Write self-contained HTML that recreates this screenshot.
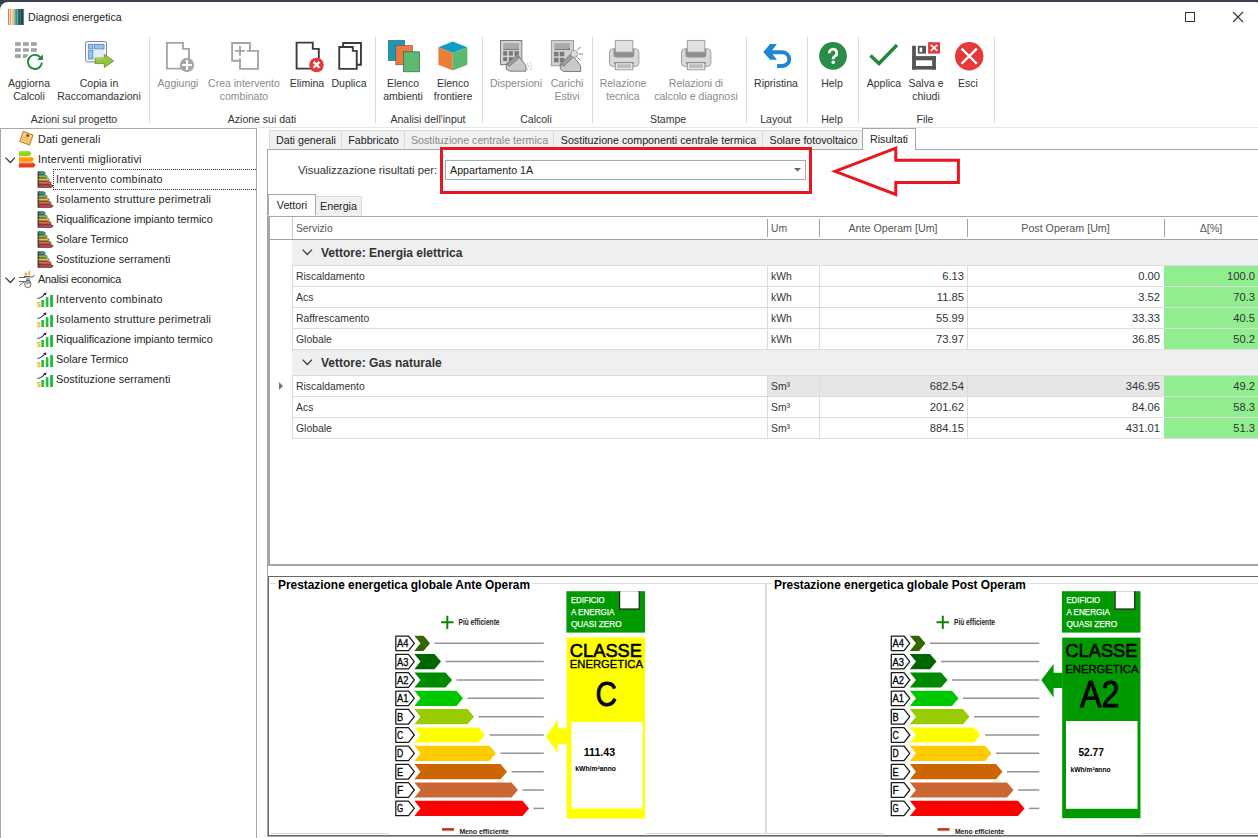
<!DOCTYPE html>
<html><head><meta charset="utf-8">
<style>
html,body{margin:0;padding:0}
body{width:1258px;height:838px;overflow:hidden;position:relative;background:#384050;font-family:"Liberation Sans",sans-serif;color:#222}
.a{position:absolute}
.t{position:absolute;white-space:nowrap;line-height:13px;font-size:11px;margin-top:1px}
.c{text-align:center}
.rl{position:absolute;white-space:nowrap;line-height:13px;font-size:10.5px;color:#333;text-align:center;width:120px}
.dis{color:#8a8a8a}
.sep{position:absolute;top:37px;height:86px;width:1px;background:#dcdcdc}
.gl{position:absolute;white-space:nowrap;line-height:13px;font-size:10.5px;color:#333;text-align:center;width:160px;top:113px}
svg{position:absolute;overflow:visible}
</style></head><body>
<div class="a" id="win" style="left:0;top:2px;width:1264px;height:836px;background:#fff;border-radius:8px 8px 0 0"></div>

<!-- title bar -->
<svg style="left:8px;top:9px" width="16" height="16">
<rect x="0" y="0" width="1.2" height="16" fill="#e07a4a"/>
<rect x="1.8" y="0" width="1.2" height="16" fill="#f0a060"/>
<rect x="3.6" y="0" width="1.2" height="16" fill="#e8c070"/>
<rect x="5.4" y="0" width="1.5" height="16" fill="#9ab070"/>
<rect x="7.2" y="0" width="2" height="16" fill="#3a9080"/>
<rect x="9.5" y="0" width="2.5" height="16" fill="#1a6a6a"/>
<rect x="12.2" y="0" width="3.5" height="16" fill="#1a4a55"/>
</svg>
<div class="t" style="left:28px;top:10px;font-size:10.6px;color:#1a1a1a">Diagnosi energetica</div>
<div class="a" style="left:1185px;top:12px;width:8px;height:8px;border:1px solid #333"></div>
<svg style="left:1233px;top:12px" width="10" height="10"><path d="M0,0L10,10M10,0L0,10" stroke="#333" stroke-width="1.1"/></svg>

<!-- ribbon -->
<div class="a" style="left:257px;top:127px;width:1001px;height:1px;background:#e6e6e6"></div>
<div class="sep" style="left:149px"></div>
<div class="sep" style="left:375px"></div>
<div class="sep" style="left:482px"></div>
<div class="sep" style="left:592px"></div>
<div class="sep" style="left:746px"></div>
<div class="sep" style="left:807px"></div>
<div class="sep" style="left:858px"></div>
<div class="sep" style="left:994px"></div>

<div class="gl" style="left:-6px">Azioni sul progetto</div>
<div class="gl" style="left:182px">Azione sui dati</div>
<div class="gl" style="left:348px">Analisi dell'input</div>
<div class="gl" style="left:456px">Calcoli</div>
<div class="gl" style="left:588px">Stampe</div>
<div class="gl" style="left:696px">Layout</div>
<div class="gl" style="left:752px">Help</div>
<div class="gl" style="left:845px">File</div>

<div class="rl" style="left:-31px;top:77px">Aggiorna<br>Calcoli</div>
<div class="rl" style="left:39px;top:77px">Copia in<br>Raccomandazioni</div>
<div class="rl dis" style="left:118px;top:77px">Aggiungi</div>
<div class="rl dis" style="left:184px;top:77px">Crea intervento<br>combinato</div>
<div class="rl" style="left:247px;top:77px">Elimina</div>
<div class="rl" style="left:289px;top:77px">Duplica</div>
<div class="rl" style="left:343px;top:77px">Elenco<br>ambienti</div>
<div class="rl" style="left:393px;top:77px">Elenco<br>frontiere</div>
<div class="rl dis" style="left:456px;top:77px">Dispersioni</div>
<div class="rl dis" style="left:507px;top:77px">Carichi<br>Estivi</div>
<div class="rl dis" style="left:563px;top:77px">Relazione<br>tecnica</div>
<div class="rl dis" style="left:636px;top:77px">Relazioni di<br>calcolo e diagnosi</div>
<div class="rl" style="left:716px;top:77px">Ripristina</div>
<div class="rl" style="left:772px;top:77px">Help</div>
<div class="rl" style="left:824px;top:77px">Applica</div>
<div class="rl" style="left:866px;top:77px">Salva e<br>chiudi</div>
<div class="rl" style="left:908px;top:77px">Esci</div>

<!-- Aggiorna Calcoli -->
<svg style="left:14px;top:41px" width="30" height="30" viewBox="0 0 30 30">
<g fill="#a2a2a2">
<rect x="1" y="1.2" width="5.8" height="3.6"/><rect x="9" y="1.2" width="5.8" height="3.6"/><rect x="17" y="1.2" width="5.8" height="3.6"/>
<rect x="1" y="7.2" width="5.8" height="3.6"/><rect x="9" y="7.2" width="5.8" height="3.6"/><rect x="17" y="7.2" width="5.8" height="3.6"/>
<rect x="1" y="13.2" width="5.8" height="3.7"/><path d="M9,13.2H14.7L12,16.9H9Z"/>
</g>
<path d="M27.9,21.5A7,7 0 1 1 26.6,16.8" fill="none" stroke="#1f8a3a" stroke-width="1.9"/>
<path d="M28.9,13.2V18.9H23.2Z" fill="#1f8a3a"/>
</svg>
<!-- Copia in Raccomandazioni -->
<svg style="left:84px;top:40px" width="32" height="30" viewBox="0 0 32 30">
<rect x="1.6" y="1.5" width="20.9" height="20.4" rx="1.6" fill="#fff" stroke="#7383ba" stroke-width="1"/>
<rect x="3.5" y="3" width="17" height="16.5" fill="#e8ecf7"/>
<g fill="#95c3e6" stroke="#5b93cc" stroke-width="0.9"><rect x="4.6" y="4.5" width="4.3" height="4.4"/><rect x="10.5" y="4.5" width="9.5" height="4.4"/><rect x="4.6" y="10.5" width="4.3" height="8.5"/></g>
<path d="M11,18.1H20.3V14.2L29.7,20.9L20.3,27.6V23.6H11Z" fill="#94c43c" stroke="#5f8f22" stroke-width="0.8"/>
<path d="M11.6,19H20.8" stroke="#c2e27a" stroke-width="1"/>
</svg>
<!-- Aggiungi -->
<svg style="left:165px;top:41px" width="32" height="32" viewBox="0 0 32 32">
<path d="M1.9,1.9H18V7.9H24V27.6H1.9Z" fill="#fff" stroke="#a6a6a6" stroke-width="1.9"/>
<circle cx="22" cy="24" r="7.2" fill="#a6a6a6"/>
<path d="M22,19V29M17,24H27" stroke="#fff" stroke-width="2.1"/>
</svg>
<!-- Crea intervento combinato -->
<svg style="left:230px;top:41px" width="32" height="32" viewBox="0 0 32 32">
<path d="M20,10.8V2H2.1V19.7H10M17,9.9H28V27.9H10V17.2M5,9.9H14.9M10,4.9V14.8" fill="none" stroke="#a3a3a3" stroke-width="1.85"/>
</svg>
<!-- Elimina -->
<svg style="left:295px;top:41px" width="32" height="32" viewBox="0 0 32 32">
<path d="M1.6,1.6H17.8V7.9H23.8V27.6H1.6Z" fill="#fff" stroke="#3c3c3c" stroke-width="1.9"/>
<circle cx="21.5" cy="24" r="7.3" fill="#e53a3a"/>
<path d="M18.6,20.9L24.4,26.7M24.4,20.9L18.6,26.7" stroke="#fff" stroke-width="2.3"/>
</svg>
<!-- Duplica -->
<svg style="left:338px;top:41px" width="30" height="32" viewBox="0 0 30 32">
<path d="M5.15,6V2.05H22.95V23.75H19" fill="none" stroke="#3c3c3c" stroke-width="1.9"/>
<path d="M1.25,6.05H14.8V9.9H18.75V27.85H1.25Z" fill="#fff" stroke="#3c3c3c" stroke-width="1.9"/>
</svg>
<!-- Elenco ambienti -->
<svg style="left:388px;top:40px" width="33" height="33" viewBox="0 0 33 33">
<rect x="0.5" y="0.5" width="16" height="20" fill="#1b98b6" stroke="#2b5a66" stroke-width="0.6"/>
<rect x="7.8" y="5.5" width="16.5" height="19.3" fill="#e97a41" stroke="#7a4a30" stroke-width="0.6"/>
<rect x="15.4" y="11.8" width="16" height="20" fill="#5db872" stroke="#2f6a40" stroke-width="0.7"/>
</svg>
<!-- Elenco frontiere -->
<svg style="left:438px;top:41px" width="31" height="31" viewBox="0 0 31 31">
<path d="M14.7,0.4L29.4,6.3L14.7,12L0.4,6.3Z" fill="#109cc4"/>
<path d="M0.4,6.3L14.7,12V29.4L0.4,23.8Z" fill="#e97e3b"/>
<path d="M29.4,6.3L14.7,12V29.4L29.4,23.8Z" fill="#5bb96f"/>
</svg>
<!-- Dispersioni -->
<svg style="left:500px;top:40px" width="34" height="33" viewBox="0 0 34 33">
<rect x="0.5" y="0.5" width="21.3" height="24.2" fill="#d2d2d2" stroke="#7a7a7a" stroke-width="1"/>
<rect x="3.3" y="3.2" width="15.7" height="6.4" fill="#a9a9a9"/>
<rect x="3.3" y="9" width="15.7" height="0.8" fill="#6a6a6a"/>
<g fill="#7a7a7a"><rect x="3.2" y="11.1" width="4" height="4.5"/><rect x="8.9" y="11.1" width="4" height="4.5"/><rect x="14.5" y="11.1" width="4.4" height="4.5"/><rect x="3.2" y="17.1" width="4" height="3.9"/><rect x="8.9" y="17.1" width="4" height="3.9"/></g>
<path d="M6.3,24V29.2L10,31.2H26V25.5L18.4,16Z" fill="#c9c9c9" stroke="#555" stroke-width="0.7"/>
<path d="M6.5,24.2L16,15.5L19.2,17.8L9.8,26.2Z" fill="#9c9c9c" stroke="#555" stroke-width="0.5"/>
<g fill="#a8a8a8"><rect x="27" y="23.5" width="1" height="1"/><rect x="29.5" y="22.5" width="1" height="1"/><rect x="28" y="26" width="1" height="1"/><rect x="30.5" y="25.5" width="1" height="1"/><rect x="27" y="28.5" width="1" height="1"/><rect x="29.5" y="29" width="1" height="1"/><rect x="31" y="28" width="1" height="1"/></g>
</svg>
<!-- Carichi Estivi -->
<svg style="left:550px;top:40px" width="34" height="33" viewBox="0 0 34 33">
<rect x="1.3" y="0.5" width="22.2" height="25.3" fill="#d2d2d2" stroke="#8a8a8a" stroke-width="0.8"/>
<rect x="4.3" y="3.2" width="15.7" height="6.4" fill="#a9a9a9"/>
<rect x="4.3" y="9" width="15.7" height="0.8" fill="#6a6a6a"/>
<g fill="#7a7a7a"><rect x="4" y="11.8" width="4.5" height="4.5"/><rect x="9.8" y="11.8" width="4.5" height="4.5"/><rect x="4" y="17.8" width="4.5" height="4.5"/><rect x="9.8" y="17.8" width="4.5" height="4.5"/></g>
<path d="M10.3,24V29.2L13.5,31.5H30.7V25.8L22.8,15.6Z" fill="#c9c9c9" stroke="#555" stroke-width="0.7"/>
<path d="M10.5,24.2L20.5,14L23.8,16.5L13.6,26.4Z" fill="#9c9c9c" stroke="#555" stroke-width="0.5"/>
<circle cx="24.3" cy="13.8" r="3.6" fill="#dcdcdc" stroke="#777" stroke-width="0.6"/>
<path d="M27.5,10L30.5,7M29,14H33M27.5,17.5L30.5,20.5M20,9.5L18.5,8" stroke="#666" stroke-width="0.9"/>
</svg>
<!-- Relazione tecnica -->
<svg style="left:609px;top:40px" width="32" height="31" viewBox="0 0 32 31">
<rect x="0.5" y="8.8" width="29.4" height="17.6" rx="3.5" fill="#d9d9d9" stroke="#9a9a9a" stroke-width="0.9"/>
<path d="M4.5,8.8H25.3V14.4A3,3 0 0 1 22.3,17.4H7.5A3,3 0 0 1 4.5,14.4Z" fill="#8f8f8f"/>
<rect x="6.3" y="0.4" width="17.6" height="11.7" fill="#e2e2e2" stroke="#9a9a9a" stroke-width="0.9"/>
<rect x="5" y="22" width="20" height="1.8" fill="#8f8f8f"/>
<rect x="6.3" y="23.6" width="17.6" height="6.2" fill="#bdbdbd" stroke="#9a9a9a" stroke-width="0.9"/>
<rect x="7.6" y="23.8" width="15" height="4.8" fill="none" stroke="#f2f2f2" stroke-width="0.9"/>
</svg>
<!-- Relazioni di calcolo -->
<svg style="left:681px;top:40px" width="32" height="31" viewBox="0 0 32 31">
<rect x="0.5" y="8.8" width="29.4" height="17.6" rx="3.5" fill="#d9d9d9" stroke="#9a9a9a" stroke-width="0.9"/>
<path d="M4.5,8.8H25.3V14.4A3,3 0 0 1 22.3,17.4H7.5A3,3 0 0 1 4.5,14.4Z" fill="#8f8f8f"/>
<rect x="6.3" y="0.4" width="17.6" height="11.7" fill="#e2e2e2" stroke="#9a9a9a" stroke-width="0.9"/>
<rect x="5" y="22" width="20" height="1.8" fill="#8f8f8f"/>
<rect x="6.3" y="23.6" width="17.6" height="6.2" fill="#bdbdbd" stroke="#9a9a9a" stroke-width="0.9"/>
<rect x="7.6" y="23.8" width="15" height="4.8" fill="none" stroke="#f2f2f2" stroke-width="0.9"/>
</svg>
<!-- Ripristina -->
<svg style="left:762px;top:42px" width="31" height="28" viewBox="0 0 31 28">
<path d="M1.3,9.9L8.1,1.9H14.9L8.9,9.9L14.9,17.7H8.1Z" fill="#1f86d4"/>
<path d="M8.5,10.3H20.45A6.85,6.85 0 0 1 20.45,24H15.1" fill="none" stroke="#1f86d4" stroke-width="3.9"/>
</svg>
<!-- Help -->
<svg style="left:819px;top:42px" width="29" height="29" viewBox="0 0 29 29">
<circle cx="14" cy="13.9" r="13.9" fill="#2a8c47"/>
<path d="M10.4,11.2A3.7,3.7 0 1 1 15.6,14.3C14.4,15 14,15.6 14,17.3" fill="none" stroke="#fff" stroke-width="2.7"/>
<circle cx="14.2" cy="20.2" r="1.75" fill="#fff"/>
</svg>
<!-- Applica -->
<svg style="left:869px;top:43px" width="30" height="24" viewBox="0 0 30 24">
<path d="M1.5,12.5L10,20.5L28,2" fill="none" stroke="#23893a" stroke-width="3.4"/>
</svg>
<!-- Salva e chiudi -->
<svg style="left:911px;top:41px" width="31" height="31" viewBox="0 0 31 31">
<g fill="#555"><rect x="1.1" y="4.8" width="3.8" height="23.8"/><rect x="1.1" y="25" width="23.8" height="3.6"/><rect x="21.2" y="15.1" width="3.7" height="13.5"/><rect x="1.1" y="15.1" width="23.8" height="4.2"/><rect x="6.8" y="4.8" width="8.2" height="7.8"/></g>
<rect x="8.6" y="6.6" width="2.6" height="4.4" fill="#fff"/>
<rect x="17.1" y="1.2" width="11.9" height="11.4" fill="#e53a3a"/>
<path d="M19.8,3.9L26.3,9.9M26.3,3.9L19.8,9.9" stroke="#fff" stroke-width="1.6"/>
</svg>
<!-- Esci -->
<svg style="left:955px;top:42px" width="29" height="29" viewBox="0 0 29 29">
<circle cx="14.2" cy="14.2" r="14.2" fill="#e53a3a"/>
<path d="M6.6,6.6L21.8,21.8M21.8,6.6L6.6,21.8" stroke="#fff" stroke-width="2.3"/>
</svg>

<!-- tree panel -->
<div class="a" style="left:0;top:128px;width:255px;height:710px;border:1px solid #a8a8a8;border-bottom:none;background:#fff"></div>
<!-- TREE_START -->
<svg style="left:19px;top:131px" width="16" height="16" viewBox="0 0 16 16">
<g transform="translate(-0.6,-0.8) rotate(20 8 8)"><rect x="2.8" y="2.8" width="10.4" height="10.4" fill="#f3d77a" stroke="#c58a45" stroke-width="1.2"/>
<path d="M4.5,8H11.5M4.5,10.3H11.5" stroke="#c9a060" stroke-width="0.8"/></g>
<circle cx="8.7" cy="4.4" r="1.5" fill="#c0282a"/>
</svg>
<div class="t" style="left:38px;top:132px;font-size:10.8px;color:#222;letter-spacing:0.140px">Dati generali</div>
<svg style="left:5px;top:157px" width="11" height="7" viewBox="0 0 11 7"><path d="M0.6,0.6L5.3,5.5L10,0.6" fill="none" stroke="#3a3a3a" stroke-width="1.3"/></svg>
<svg style="left:19px;top:151px" width="17" height="17" viewBox="0 0 17 17">
<path d="M0,0H10.5L12.5,2.5L10.5,5H0Z" fill="#8fd61a"/>
<path d="M0,5.8H13L15,8.3L13,10.8H0Z" fill="#ff9a00"/>
<path d="M0,11.4H14.5L16.5,13.9L14.5,16.4H0Z" fill="#ef3a1a"/>
<path d="M0,0.8H10M0,6.6H12.5M0,12.2H14" stroke="#fff" stroke-opacity="0.35" stroke-width="1"/>
</svg>
<div class="t" style="left:38px;top:152px;font-size:10.8px;color:#222;letter-spacing:0.230px">Interventi migliorativi</div>
<svg style="left:37px;top:171px" width="17" height="17" viewBox="0 0 17 17">
<rect x="0.5" y="0.5" width="2.2" height="16" fill="#555"/>
<path d="M1.5,0.8H6.8L8.5,2.2L6.8,3.6H1.5Z" fill="#2aa58a" stroke="#333" stroke-width="0.7"/>
<path d="M1.5,4H8.5L10.3,5.4L8.5,6.8H1.5Z" fill="#8ac34a" stroke="#333" stroke-width="0.7"/>
<path d="M1.5,7.2H10.5L12.3,8.6L10.5,10H1.5Z" fill="#f2c33a" stroke="#333" stroke-width="0.7"/>
<path d="M1.5,10.4H12.5L14.3,11.8L12.5,13.2H1.5Z" fill="#e8643a" stroke="#333" stroke-width="0.7"/>
<path d="M1.5,13.6H14.3L16.2,15L14.3,16.4H1.5Z" fill="#d8394a" stroke="#333" stroke-width="0.7"/>
</svg>
<div class="t" style="left:56px;top:172px;font-size:10.8px;color:#222;letter-spacing:0.300px">Intervento combinato</div>
<svg style="left:37px;top:191px" width="17" height="17" viewBox="0 0 17 17">
<rect x="0.5" y="0.5" width="2.2" height="16" fill="#555"/>
<path d="M1.5,0.8H6.8L8.5,2.2L6.8,3.6H1.5Z" fill="#2aa58a" stroke="#333" stroke-width="0.7"/>
<path d="M1.5,4H8.5L10.3,5.4L8.5,6.8H1.5Z" fill="#8ac34a" stroke="#333" stroke-width="0.7"/>
<path d="M1.5,7.2H10.5L12.3,8.6L10.5,10H1.5Z" fill="#f2c33a" stroke="#333" stroke-width="0.7"/>
<path d="M1.5,10.4H12.5L14.3,11.8L12.5,13.2H1.5Z" fill="#e8643a" stroke="#333" stroke-width="0.7"/>
<path d="M1.5,13.6H14.3L16.2,15L14.3,16.4H1.5Z" fill="#d8394a" stroke="#333" stroke-width="0.7"/>
</svg>
<div class="t" style="left:56px;top:192px;font-size:10.8px;color:#222;letter-spacing:0.200px">Isolamento strutture perimetrali</div>
<svg style="left:37px;top:211px" width="17" height="17" viewBox="0 0 17 17">
<rect x="0.5" y="0.5" width="2.2" height="16" fill="#555"/>
<path d="M1.5,0.8H6.8L8.5,2.2L6.8,3.6H1.5Z" fill="#2aa58a" stroke="#333" stroke-width="0.7"/>
<path d="M1.5,4H8.5L10.3,5.4L8.5,6.8H1.5Z" fill="#8ac34a" stroke="#333" stroke-width="0.7"/>
<path d="M1.5,7.2H10.5L12.3,8.6L10.5,10H1.5Z" fill="#f2c33a" stroke="#333" stroke-width="0.7"/>
<path d="M1.5,10.4H12.5L14.3,11.8L12.5,13.2H1.5Z" fill="#e8643a" stroke="#333" stroke-width="0.7"/>
<path d="M1.5,13.6H14.3L16.2,15L14.3,16.4H1.5Z" fill="#d8394a" stroke="#333" stroke-width="0.7"/>
</svg>
<div class="t" style="left:56px;top:212px;font-size:10.8px;color:#222;letter-spacing:-0.034px">Riqualificazione impianto termico</div>
<svg style="left:37px;top:231px" width="17" height="17" viewBox="0 0 17 17">
<rect x="0.5" y="0.5" width="2.2" height="16" fill="#555"/>
<path d="M1.5,0.8H6.8L8.5,2.2L6.8,3.6H1.5Z" fill="#2aa58a" stroke="#333" stroke-width="0.7"/>
<path d="M1.5,4H8.5L10.3,5.4L8.5,6.8H1.5Z" fill="#8ac34a" stroke="#333" stroke-width="0.7"/>
<path d="M1.5,7.2H10.5L12.3,8.6L10.5,10H1.5Z" fill="#f2c33a" stroke="#333" stroke-width="0.7"/>
<path d="M1.5,10.4H12.5L14.3,11.8L12.5,13.2H1.5Z" fill="#e8643a" stroke="#333" stroke-width="0.7"/>
<path d="M1.5,13.6H14.3L16.2,15L14.3,16.4H1.5Z" fill="#d8394a" stroke="#333" stroke-width="0.7"/>
</svg>
<div class="t" style="left:56px;top:232px;font-size:10.8px;color:#222;letter-spacing:0.040px">Solare Termico</div>
<svg style="left:37px;top:251px" width="17" height="17" viewBox="0 0 17 17">
<rect x="0.5" y="0.5" width="2.2" height="16" fill="#555"/>
<path d="M1.5,0.8H6.8L8.5,2.2L6.8,3.6H1.5Z" fill="#2aa58a" stroke="#333" stroke-width="0.7"/>
<path d="M1.5,4H8.5L10.3,5.4L8.5,6.8H1.5Z" fill="#8ac34a" stroke="#333" stroke-width="0.7"/>
<path d="M1.5,7.2H10.5L12.3,8.6L10.5,10H1.5Z" fill="#f2c33a" stroke="#333" stroke-width="0.7"/>
<path d="M1.5,10.4H12.5L14.3,11.8L12.5,13.2H1.5Z" fill="#e8643a" stroke="#333" stroke-width="0.7"/>
<path d="M1.5,13.6H14.3L16.2,15L14.3,16.4H1.5Z" fill="#d8394a" stroke="#333" stroke-width="0.7"/>
</svg>
<div class="t" style="left:56px;top:252px;font-size:10.8px;color:#222;letter-spacing:0.070px">Sostituzione serramenti</div>
<svg style="left:5px;top:277px" width="11" height="7" viewBox="0 0 11 7"><path d="M0.6,0.6L5.3,5.5L10,0.6" fill="none" stroke="#3a3a3a" stroke-width="1.3"/></svg>
<svg style="left:19px;top:266px" width="22" height="22" viewBox="0 0 22 22">
<path d="M0,11.5H6.5M0,15.5H5.5M0.2,19.7L6,15.2" stroke="#555" stroke-width="0.9" fill="none"/>
<ellipse cx="8.8" cy="18" rx="3.1" ry="3.6" fill="#fff" stroke="#555" stroke-width="0.9"/>
<path d="M8,11.5V18.5M10,11.5V18M5,10.5L11,10.5" stroke="#555" stroke-width="1"/>
<path d="M11,11.2L14,10.7L15.8,9.2" stroke="#555" stroke-width="0.9" fill="none"/>
<circle cx="6.8" cy="8.2" r="1.3" fill="#f5a623"/><circle cx="10.2" cy="7.6" r="1.3" fill="#f5a623"/>
<path d="M6,6.2H8M9.5,5.4H11.5" stroke="#999" stroke-width="0.6"/>
</svg>
<div class="t" style="left:38px;top:272px;font-size:10.8px;color:#222;letter-spacing:-0.240px">Analisi economica</div>
<svg style="left:37px;top:292px" width="18" height="17" viewBox="0 0 18 17">
<path d="M0.5,6.5C3.5,6 6,4.5 8,1.5" fill="none" stroke="#2a2a5a" stroke-width="1.1"/>
<path d="M6.2,1.2L9.6,0.4L8.8,3.6Z" fill="#2a2a5a"/>
<rect x="4.3" y="8" width="2.6" height="7" fill="#1fbf3a"/>
<rect x="8.8" y="5.2" width="2.6" height="9.8" fill="#1fbf3a"/>
<rect x="13.1" y="3" width="2.9" height="12" fill="#1fbf3a"/>
<text x="0" y="15" font-size="7" font-weight="bold" fill="#f5b400" font-family="Liberation Sans">$</text>
</svg>
<div class="t" style="left:56px;top:292px;font-size:10.8px;color:#222;letter-spacing:0.300px">Intervento combinato</div>
<svg style="left:37px;top:312px" width="18" height="17" viewBox="0 0 18 17">
<path d="M0.5,6.5C3.5,6 6,4.5 8,1.5" fill="none" stroke="#2a2a5a" stroke-width="1.1"/>
<path d="M6.2,1.2L9.6,0.4L8.8,3.6Z" fill="#2a2a5a"/>
<rect x="4.3" y="8" width="2.6" height="7" fill="#1fbf3a"/>
<rect x="8.8" y="5.2" width="2.6" height="9.8" fill="#1fbf3a"/>
<rect x="13.1" y="3" width="2.9" height="12" fill="#1fbf3a"/>
<text x="0" y="15" font-size="7" font-weight="bold" fill="#f5b400" font-family="Liberation Sans">$</text>
</svg>
<div class="t" style="left:56px;top:312px;font-size:10.8px;color:#222;letter-spacing:0.200px">Isolamento strutture perimetrali</div>
<svg style="left:37px;top:332px" width="18" height="17" viewBox="0 0 18 17">
<path d="M0.5,6.5C3.5,6 6,4.5 8,1.5" fill="none" stroke="#2a2a5a" stroke-width="1.1"/>
<path d="M6.2,1.2L9.6,0.4L8.8,3.6Z" fill="#2a2a5a"/>
<rect x="4.3" y="8" width="2.6" height="7" fill="#1fbf3a"/>
<rect x="8.8" y="5.2" width="2.6" height="9.8" fill="#1fbf3a"/>
<rect x="13.1" y="3" width="2.9" height="12" fill="#1fbf3a"/>
<text x="0" y="15" font-size="7" font-weight="bold" fill="#f5b400" font-family="Liberation Sans">$</text>
</svg>
<div class="t" style="left:56px;top:332px;font-size:10.8px;color:#222;letter-spacing:-0.034px">Riqualificazione impianto termico</div>
<svg style="left:37px;top:352px" width="18" height="17" viewBox="0 0 18 17">
<path d="M0.5,6.5C3.5,6 6,4.5 8,1.5" fill="none" stroke="#2a2a5a" stroke-width="1.1"/>
<path d="M6.2,1.2L9.6,0.4L8.8,3.6Z" fill="#2a2a5a"/>
<rect x="4.3" y="8" width="2.6" height="7" fill="#1fbf3a"/>
<rect x="8.8" y="5.2" width="2.6" height="9.8" fill="#1fbf3a"/>
<rect x="13.1" y="3" width="2.9" height="12" fill="#1fbf3a"/>
<text x="0" y="15" font-size="7" font-weight="bold" fill="#f5b400" font-family="Liberation Sans">$</text>
</svg>
<div class="t" style="left:56px;top:352px;font-size:10.8px;color:#222;letter-spacing:0.040px">Solare Termico</div>
<svg style="left:37px;top:372px" width="18" height="17" viewBox="0 0 18 17">
<path d="M0.5,6.5C3.5,6 6,4.5 8,1.5" fill="none" stroke="#2a2a5a" stroke-width="1.1"/>
<path d="M6.2,1.2L9.6,0.4L8.8,3.6Z" fill="#2a2a5a"/>
<rect x="4.3" y="8" width="2.6" height="7" fill="#1fbf3a"/>
<rect x="8.8" y="5.2" width="2.6" height="9.8" fill="#1fbf3a"/>
<rect x="13.1" y="3" width="2.9" height="12" fill="#1fbf3a"/>
<text x="0" y="15" font-size="7" font-weight="bold" fill="#f5b400" font-family="Liberation Sans">$</text>
</svg>
<div class="t" style="left:56px;top:372px;font-size:10.8px;color:#222;letter-spacing:0.070px">Sostituzione serramenti</div>
<div class="a" style="left:53px;top:169px;width:202px;height:19px;border:1px dotted #333;border-right:none"></div>
<!-- TREE_END -->

<!-- content -->
<!-- CONTENT_START -->
<div class="a" style="left:269px;top:130px;width:72px;height:19px;background:#f0f0f0;border-top:1px solid #dcdcdc;border-left:1px solid #dcdcdc;box-sizing:border-box"></div>
<div class="t c" style="left:270px;top:133px;width:72px;font-size:10.7px;color:#222">Dati generali</div>
<div class="a" style="left:341px;top:130px;width:63px;height:19px;background:#f0f0f0;border-top:1px solid #dcdcdc;border-left:1px solid #dcdcdc;box-sizing:border-box"></div>
<div class="t c" style="left:342px;top:133px;width:63px;font-size:10.7px;color:#222">Fabbricato</div>
<div class="a" style="left:404px;top:130px;width:149px;height:19px;background:#f0f0f0;border-top:1px solid #dcdcdc;border-left:1px solid #dcdcdc;box-sizing:border-box"></div>
<div class="t c" style="left:405px;top:133px;width:149px;font-size:10.7px;color:#8a8a8a">Sostituzione centrale termica</div>
<div class="a" style="left:553px;top:130px;width:209px;height:19px;background:#f0f0f0;border-top:1px solid #dcdcdc;border-left:1px solid #dcdcdc;box-sizing:border-box"></div>
<div class="t c" style="left:554px;top:133px;width:209px;font-size:10.7px;color:#222">Sostituzione componenti centrale termica</div>
<div class="a" style="left:762px;top:130px;width:101px;height:19px;background:#f0f0f0;border-top:1px solid #dcdcdc;border-left:1px solid #dcdcdc;box-sizing:border-box"></div>
<div class="t c" style="left:763px;top:133px;width:101px;font-size:10.7px;color:#222">Solare fotovoltaico</div>
<div class="a" style="left:267px;top:149px;width:1000px;height:688px;border:1px solid #a8a8a8;box-sizing:border-box;background:#fff"></div>
<div class="a" style="left:862px;top:128px;width:54px;height:22px;background:#fff;border:1px solid #a8a8a8;border-bottom:none;box-sizing:border-box"></div>
<div class="t c" style="left:863px;top:132px;width:52px;font-size:10.7px;color:#222">Risultati</div>
<div class="t" style="left:298px;top:163px;font-size:11.3px;color:#333;">Visualizzazione risultati per:</div>
<div class="a" style="left:445px;top:160px;width:361px;height:20px;border:1px solid #a9a9a9;box-sizing:border-box;background:#fff"></div>
<div class="t" style="left:450px;top:163px;font-size:10.7px;color:#222;">Appartamento 1A</div>
<svg style="left:794px;top:168px" width="8" height="4"><path d="M0,0H7L3.5,3.5Z" fill="#666"/></svg>
<div class="a" style="left:440px;top:147px;width:372px;height:47px;border:3px solid #e8161e;box-sizing:border-box"></div>
<svg style="left:0;top:0" width="1258" height="838"><path d="M835,171.3L895.8,148.2V160.2H958.4V182.6H895.8V194.5Z" fill="none" stroke="#e8161e" stroke-width="3" stroke-linejoin="miter"/></svg>
<div class="a" style="left:316px;top:196px;width:46px;height:20px;background:#f0f0f0;border-top:1px solid #dcdcdc;border-right:1px solid #dcdcdc;box-sizing:border-box"></div>
<div class="t c" style="left:316px;top:199px;width:45px;font-size:10.7px;color:#222">Energia</div>
<div class="a" style="left:268px;top:216px;width:1000px;height:350px;border:2px solid #a6a6a6;border-top:1px solid #a6a6a6;box-sizing:border-box;background:#fff"></div>
<div class="a" style="left:268px;top:194px;width:48px;height:21px;background:#fff;border:1px solid #a8a8a8;border-bottom:none;box-sizing:border-box"></div>
<div class="t c" style="left:269px;top:198px;width:46px;font-size:10.7px;color:#222">Vettori</div>
<div class="a" style="left:292px;top:217px;width:1px;height:22px;background:#c8c8c8"></div>
<div class="a" style="left:767px;top:219px;width:1px;height:18px;background:#a0a0a0"></div>
<div class="a" style="left:819px;top:219px;width:1px;height:18px;background:#a0a0a0"></div>
<div class="a" style="left:967px;top:219px;width:1px;height:18px;background:#a0a0a0"></div>
<div class="a" style="left:1164px;top:219px;width:1px;height:18px;background:#a0a0a0"></div>
<div class="a" style="left:270px;top:239px;width:988px;height:1px;background:#a0a0a0"></div>
<div class="t" style="left:296px;top:221px;font-size:10.3px;color:#555;">Servizio</div>
<div class="t" style="left:771px;top:221px;font-size:10.3px;color:#555;">Um</div>
<div class="t c" style="left:819px;top:221px;width:148px;font-size:10.7px;color:#555">Ante Operam [Um]</div>
<div class="t c" style="left:967px;top:221px;width:197px;font-size:10.7px;color:#555">Post Operam [Um]</div>
<div class="t c" style="left:1164px;top:221px;width:94px;font-size:10.7px;color:#555">&Delta;[%]</div>
<div class="a" style="left:292px;top:240px;width:966px;height:26px;background:#efefef;border-bottom:1px solid #dcdcdc;box-sizing:border-box"></div>
<svg style="left:302px;top:249px" width="11" height="7" viewBox="0 0 11 7"><path d="M0.6,0.6L5.3,5.5L10,0.6" fill="none" stroke="#3a3a3a" stroke-width="1.3"/></svg>
<div class="t" style="left:321px;top:246px;font-size:12px;color:#333;font-weight:bold">Vettore: Energia elettrica</div>
<div class="a" style="left:1164px;top:266px;width:94px;height:20px;background:#90ee90"></div>
<div class="a" style="left:292px;top:286px;width:966px;height:1px;background:#dcdcdc"></div>
<div class="a" style="left:292px;top:265px;width:1px;height:21px;background:#dcdcdc"></div>
<div class="a" style="left:767px;top:265px;width:1px;height:21px;background:#dcdcdc"></div>
<div class="a" style="left:819px;top:265px;width:1px;height:21px;background:#dcdcdc"></div>
<div class="a" style="left:967px;top:265px;width:1px;height:21px;background:#dcdcdc"></div>
<div class="t" style="left:296px;top:269px;font-size:10.4px;color:#333;">Riscaldamento</div>
<div class="t" style="left:771px;top:269px;font-size:10.4px;color:#333;">kWh</div>
<div class="t" style="left:819px;top:269px;width:145px;text-align:right;font-size:11.2px;color:#333">6.13</div>
<div class="t" style="left:967px;top:269px;width:193px;text-align:right;font-size:11.2px;color:#333">0.00</div>
<div class="t" style="left:1164px;top:269px;width:91px;text-align:right;font-size:11.2px;color:#333">100.0</div>
<div class="a" style="left:1164px;top:287px;width:94px;height:20px;background:#90ee90"></div>
<div class="a" style="left:292px;top:307px;width:966px;height:1px;background:#dcdcdc"></div>
<div class="a" style="left:292px;top:286px;width:1px;height:21px;background:#dcdcdc"></div>
<div class="a" style="left:767px;top:286px;width:1px;height:21px;background:#dcdcdc"></div>
<div class="a" style="left:819px;top:286px;width:1px;height:21px;background:#dcdcdc"></div>
<div class="a" style="left:967px;top:286px;width:1px;height:21px;background:#dcdcdc"></div>
<div class="t" style="left:296px;top:290px;font-size:10.4px;color:#333;">Acs</div>
<div class="t" style="left:771px;top:290px;font-size:10.4px;color:#333;">kWh</div>
<div class="t" style="left:819px;top:290px;width:145px;text-align:right;font-size:11.2px;color:#333">11.85</div>
<div class="t" style="left:967px;top:290px;width:193px;text-align:right;font-size:11.2px;color:#333">3.52</div>
<div class="t" style="left:1164px;top:290px;width:91px;text-align:right;font-size:11.2px;color:#333">70.3</div>
<div class="a" style="left:1164px;top:308px;width:94px;height:20px;background:#90ee90"></div>
<div class="a" style="left:292px;top:328px;width:966px;height:1px;background:#dcdcdc"></div>
<div class="a" style="left:292px;top:307px;width:1px;height:21px;background:#dcdcdc"></div>
<div class="a" style="left:767px;top:307px;width:1px;height:21px;background:#dcdcdc"></div>
<div class="a" style="left:819px;top:307px;width:1px;height:21px;background:#dcdcdc"></div>
<div class="a" style="left:967px;top:307px;width:1px;height:21px;background:#dcdcdc"></div>
<div class="t" style="left:296px;top:311px;font-size:10.4px;color:#333;">Raffrescamento</div>
<div class="t" style="left:771px;top:311px;font-size:10.4px;color:#333;">kWh</div>
<div class="t" style="left:819px;top:311px;width:145px;text-align:right;font-size:11.2px;color:#333">55.99</div>
<div class="t" style="left:967px;top:311px;width:193px;text-align:right;font-size:11.2px;color:#333">33.33</div>
<div class="t" style="left:1164px;top:311px;width:91px;text-align:right;font-size:11.2px;color:#333">40.5</div>
<div class="a" style="left:1164px;top:329px;width:94px;height:20px;background:#90ee90"></div>
<div class="a" style="left:292px;top:349px;width:966px;height:1px;background:#dcdcdc"></div>
<div class="a" style="left:292px;top:328px;width:1px;height:21px;background:#dcdcdc"></div>
<div class="a" style="left:767px;top:328px;width:1px;height:21px;background:#dcdcdc"></div>
<div class="a" style="left:819px;top:328px;width:1px;height:21px;background:#dcdcdc"></div>
<div class="a" style="left:967px;top:328px;width:1px;height:21px;background:#dcdcdc"></div>
<div class="t" style="left:296px;top:332px;font-size:10.4px;color:#333;">Globale</div>
<div class="t" style="left:771px;top:332px;font-size:10.4px;color:#333;">kWh</div>
<div class="t" style="left:819px;top:332px;width:145px;text-align:right;font-size:11.2px;color:#333">73.97</div>
<div class="t" style="left:967px;top:332px;width:193px;text-align:right;font-size:11.2px;color:#333">36.85</div>
<div class="t" style="left:1164px;top:332px;width:91px;text-align:right;font-size:11.2px;color:#333">50.2</div>
<div class="a" style="left:292px;top:350px;width:966px;height:26px;background:#efefef;border-bottom:1px solid #dcdcdc;box-sizing:border-box"></div>
<svg style="left:302px;top:359px" width="11" height="7" viewBox="0 0 11 7"><path d="M0.6,0.6L5.3,5.5L10,0.6" fill="none" stroke="#3a3a3a" stroke-width="1.3"/></svg>
<div class="t" style="left:321px;top:356px;font-size:12px;color:#333;font-weight:bold">Vettore: Gas naturale</div>
<div class="a" style="left:767px;top:376px;width:397px;height:20px;background:#e6e6e6"></div>
<div class="a" style="left:1164px;top:376px;width:94px;height:20px;background:#90ee90"></div>
<div class="a" style="left:292px;top:396px;width:966px;height:1px;background:#dcdcdc"></div>
<div class="a" style="left:292px;top:375px;width:1px;height:21px;background:#dcdcdc"></div>
<div class="a" style="left:767px;top:375px;width:1px;height:21px;background:#dcdcdc"></div>
<div class="a" style="left:819px;top:375px;width:1px;height:21px;background:#dcdcdc"></div>
<div class="a" style="left:967px;top:375px;width:1px;height:21px;background:#dcdcdc"></div>
<div class="t" style="left:296px;top:379px;font-size:10.4px;color:#333;">Riscaldamento</div>
<div class="t" style="left:771px;top:379px;font-size:10.4px;color:#333;">Sm&sup3;</div>
<div class="t" style="left:819px;top:379px;width:145px;text-align:right;font-size:11.2px;color:#333">682.54</div>
<div class="t" style="left:967px;top:379px;width:193px;text-align:right;font-size:11.2px;color:#333">346.95</div>
<div class="t" style="left:1164px;top:379px;width:91px;text-align:right;font-size:11.2px;color:#333">49.2</div>
<svg style="left:279px;top:382px" width="5" height="8"><path d="M0,0L4,4L0,8Z" fill="#777"/></svg>
<div class="a" style="left:1164px;top:397px;width:94px;height:20px;background:#90ee90"></div>
<div class="a" style="left:292px;top:417px;width:966px;height:1px;background:#dcdcdc"></div>
<div class="a" style="left:292px;top:396px;width:1px;height:21px;background:#dcdcdc"></div>
<div class="a" style="left:767px;top:396px;width:1px;height:21px;background:#dcdcdc"></div>
<div class="a" style="left:819px;top:396px;width:1px;height:21px;background:#dcdcdc"></div>
<div class="a" style="left:967px;top:396px;width:1px;height:21px;background:#dcdcdc"></div>
<div class="t" style="left:296px;top:400px;font-size:10.4px;color:#333;">Acs</div>
<div class="t" style="left:771px;top:400px;font-size:10.4px;color:#333;">Sm&sup3;</div>
<div class="t" style="left:819px;top:400px;width:145px;text-align:right;font-size:11.2px;color:#333">201.62</div>
<div class="t" style="left:967px;top:400px;width:193px;text-align:right;font-size:11.2px;color:#333">84.06</div>
<div class="t" style="left:1164px;top:400px;width:91px;text-align:right;font-size:11.2px;color:#333">58.3</div>
<div class="a" style="left:1164px;top:418px;width:94px;height:20px;background:#90ee90"></div>
<div class="a" style="left:292px;top:438px;width:966px;height:1px;background:#dcdcdc"></div>
<div class="a" style="left:292px;top:417px;width:1px;height:21px;background:#dcdcdc"></div>
<div class="a" style="left:767px;top:417px;width:1px;height:21px;background:#dcdcdc"></div>
<div class="a" style="left:819px;top:417px;width:1px;height:21px;background:#dcdcdc"></div>
<div class="a" style="left:967px;top:417px;width:1px;height:21px;background:#dcdcdc"></div>
<div class="t" style="left:296px;top:421px;font-size:10.4px;color:#333;">Globale</div>
<div class="t" style="left:771px;top:421px;font-size:10.4px;color:#333;">Sm&sup3;</div>
<div class="t" style="left:819px;top:421px;width:145px;text-align:right;font-size:11.2px;color:#333">884.15</div>
<div class="t" style="left:967px;top:421px;width:193px;text-align:right;font-size:11.2px;color:#333">431.01</div>
<div class="t" style="left:1164px;top:421px;width:91px;text-align:right;font-size:11.2px;color:#333">51.3</div>
<div class="a" style="left:268px;top:576px;width:990px;height:260px;border-top:1px solid #666;border-left:1px solid #666;border-bottom:1px solid #666;box-sizing:border-box;background:#fff"></div>
<div class="a" style="left:270px;top:583px;width:496px;height:251px;border:1px solid #dcdcdc;border-left:none;box-sizing:border-box"></div>
<div class="a" style="left:766px;top:583px;width:500px;height:251px;border:1px solid #dcdcdc;box-sizing:border-box"></div>
<div class="t" style="left:276px;top:578px;padding:0 2px;background:#fff;font-size:11.9px;font-weight:bold;color:#000">Prestazione energetica globale Ante Operam</div>
<div class="t" style="left:772px;top:578px;padding:0 2px;background:#fff;font-size:11.9px;font-weight:bold;color:#000">Prestazione energetica globale Post Operam</div>
<!-- LABELS_START -->
<svg style="left:0;top:0" width="1258" height="838">
<rect x="389" y="592" width="256" height="243" fill="#fff"/><rect x="884.5" y="592" width="256" height="243" fill="#fff"/><g transform="translate(0,0)"><path d="M441,622.3H453.5M447.3,615.8V629" stroke="#108010" stroke-width="2"/>
<text x="458.5" y="625.2" font-size="8.2" font-weight="bold" fill="#222" font-family="Liberation Sans" textLength="41" lengthAdjust="spacingAndGlyphs">Più efficiente</text>
<path d="M414.3,635.7L420.5,643.3L414.3,650.9H423.5L430.0,643.3L423.5,635.7Z" fill="#336600"/>
<path d="M395.8,636.0H408.5L414.3,643.3L408.5,650.6H395.8Z" fill="#fff" stroke="#1a1a1a" stroke-width="1.25" stroke-linejoin="round"/>
<text x="397" y="647.3" font-size="10.5" fill="#000" stroke="#000" stroke-width="0.3" font-family="Liberation Sans" textLength="11.4" lengthAdjust="spacingAndGlyphs">A4</text>
<path d="M434.5,643.3H543.8" stroke="#939393" stroke-width="1.5"/>
<path d="M414.3,654.0L420.5,661.6L414.3,669.2H434.5L441.0,661.6L434.5,654.0Z" fill="#006600"/>
<path d="M395.8,654.3H408.5L414.3,661.6L408.5,668.9H395.8Z" fill="#fff" stroke="#1a1a1a" stroke-width="1.25" stroke-linejoin="round"/>
<text x="397" y="665.6" font-size="10.5" fill="#000" stroke="#000" stroke-width="0.3" font-family="Liberation Sans" textLength="11.4" lengthAdjust="spacingAndGlyphs">A3</text>
<path d="M445.5,661.6H543.8" stroke="#939393" stroke-width="1.5"/>
<path d="M414.3,672.4L420.5,680.0L414.3,687.6H445.5L452.0,680.0L445.5,672.4Z" fill="#008a00"/>
<path d="M395.8,672.7H408.5L414.3,680.0L408.5,687.3H395.8Z" fill="#fff" stroke="#1a1a1a" stroke-width="1.25" stroke-linejoin="round"/>
<text x="397" y="684.0" font-size="10.5" fill="#000" stroke="#000" stroke-width="0.3" font-family="Liberation Sans" textLength="11.4" lengthAdjust="spacingAndGlyphs">A2</text>
<path d="M456.5,680.0H543.8" stroke="#939393" stroke-width="1.5"/>
<path d="M414.3,690.7L420.5,698.3L414.3,705.9H456.5L463.0,698.3L456.5,690.7Z" fill="#00c800"/>
<path d="M395.8,691.0H408.5L414.3,698.3L408.5,705.6H395.8Z" fill="#fff" stroke="#1a1a1a" stroke-width="1.25" stroke-linejoin="round"/>
<text x="397" y="702.3" font-size="10.5" fill="#000" stroke="#000" stroke-width="0.3" font-family="Liberation Sans" textLength="11.4" lengthAdjust="spacingAndGlyphs">A1</text>
<path d="M467.5,698.3H543.8" stroke="#939393" stroke-width="1.5"/>
<path d="M414.3,709.1L420.5,716.7L414.3,724.3H467.5L474.0,716.7L467.5,709.1Z" fill="#99cc00"/>
<path d="M395.8,709.4H408.5L414.3,716.7L408.5,724.0H395.8Z" fill="#fff" stroke="#1a1a1a" stroke-width="1.25" stroke-linejoin="round"/>
<text x="397" y="720.7" font-size="10.5" fill="#000" stroke="#000" stroke-width="0.3" font-family="Liberation Sans" textLength="6.2" lengthAdjust="spacingAndGlyphs">B</text>
<path d="M478.5,716.7H543.8" stroke="#939393" stroke-width="1.5"/>
<path d="M414.3,727.4L420.5,735.0L414.3,742.6H478.5L485.0,735.0L478.5,727.4Z" fill="#ffff00"/>
<path d="M395.8,727.7H408.5L414.3,735.0L408.5,742.3H395.8Z" fill="#fff" stroke="#1a1a1a" stroke-width="1.25" stroke-linejoin="round"/>
<text x="397" y="739.0" font-size="10.5" fill="#000" stroke="#000" stroke-width="0.3" font-family="Liberation Sans" textLength="6.2" lengthAdjust="spacingAndGlyphs">C</text>
<path d="M489.5,735.0H543.8" stroke="#939393" stroke-width="1.5"/>
<path d="M414.3,745.7L420.5,753.3L414.3,760.9H489.5L496.0,753.3L489.5,745.7Z" fill="#ffcc00"/>
<path d="M395.8,746.0H408.5L414.3,753.3L408.5,760.6H395.8Z" fill="#fff" stroke="#1a1a1a" stroke-width="1.25" stroke-linejoin="round"/>
<text x="397" y="757.3" font-size="10.5" fill="#000" stroke="#000" stroke-width="0.3" font-family="Liberation Sans" textLength="6.2" lengthAdjust="spacingAndGlyphs">D</text>
<path d="M500.5,753.3H543.8" stroke="#939393" stroke-width="1.5"/>
<path d="M414.3,764.1L420.5,771.7L414.3,779.3H500.5L507.0,771.7L500.5,764.1Z" fill="#cc6600"/>
<path d="M395.8,764.4H408.5L414.3,771.7L408.5,779.0H395.8Z" fill="#fff" stroke="#1a1a1a" stroke-width="1.25" stroke-linejoin="round"/>
<text x="397" y="775.7" font-size="10.5" fill="#000" stroke="#000" stroke-width="0.3" font-family="Liberation Sans" textLength="6.2" lengthAdjust="spacingAndGlyphs">E</text>
<path d="M511.5,771.7H543.8" stroke="#939393" stroke-width="1.5"/>
<path d="M414.3,782.4L420.5,790.0L414.3,797.6H511.5L518.0,790.0L511.5,782.4Z" fill="#cc6633"/>
<path d="M395.8,782.7H408.5L414.3,790.0L408.5,797.3H395.8Z" fill="#fff" stroke="#1a1a1a" stroke-width="1.25" stroke-linejoin="round"/>
<text x="397" y="794.0" font-size="10.5" fill="#000" stroke="#000" stroke-width="0.3" font-family="Liberation Sans" textLength="6.2" lengthAdjust="spacingAndGlyphs">F</text>
<path d="M522.5,790.0H543.8" stroke="#939393" stroke-width="1.5"/>
<path d="M414.3,800.8L420.5,808.4L414.3,816.0H522.5L529.0,808.4L522.5,800.8Z" fill="#ff0000"/>
<path d="M395.8,801.1H408.5L414.3,808.4L408.5,815.7H395.8Z" fill="#fff" stroke="#1a1a1a" stroke-width="1.25" stroke-linejoin="round"/>
<text x="397" y="812.4" font-size="10.5" fill="#000" stroke="#000" stroke-width="0.3" font-family="Liberation Sans" textLength="6.2" lengthAdjust="spacingAndGlyphs">G</text>
<path d="M533.5,808.4H543.8" stroke="#939393" stroke-width="1.5"/>
<path d="M442,829.4H454" stroke="#cc3311" stroke-width="2.6"/>
<text x="459.4" y="833.6" font-size="7.5" font-weight="bold" fill="#222" font-family="Liberation Sans" textLength="49.5" lengthAdjust="spacingAndGlyphs">Meno efficiente</text>
<rect x="566.4" y="591.2" width="78.6" height="41.4" fill="#009900"/>
<rect x="619.6" y="590.6" width="19.6" height="18.4" fill="#fff" stroke="#222" stroke-width="1.2"/>
<rect x="619" y="589.5" width="21" height="1.6" fill="#fff"/>
<text x="570.9" y="602.8" font-size="9.6" fill="#fff" stroke="#fff" stroke-width="0.25" font-family="Liberation Sans" textLength="33.8" lengthAdjust="spacingAndGlyphs">EDIFICIO</text>
<text x="570.9" y="614.6" font-size="9.6" fill="#fff" stroke="#fff" stroke-width="0.25" font-family="Liberation Sans" textLength="43.5" lengthAdjust="spacingAndGlyphs">A ENERGIA</text>
<text x="570.9" y="626.8" font-size="9.6" fill="#fff" stroke="#fff" stroke-width="0.25" font-family="Liberation Sans" textLength="50.8" lengthAdjust="spacingAndGlyphs">QUASI ZERO</text>
<rect x="566.7" y="637.4" width="78.3" height="181.1" fill="#ffff00"/>
<path d="M546,736.2L557.9,719.5V728.3H567V744H557.9V753.6Z" fill="#ffff00"/>
<text x="569.8" y="656.7" font-size="19" fill="#000" stroke="#000" stroke-width="0.6" font-family="Liberation Sans" textLength="72.2" lengthAdjust="spacingAndGlyphs">CLASSE</text>
<text x="569.8" y="668.2" font-size="11.7" fill="#000" stroke="#000" stroke-width="0.35" font-family="Liberation Sans" textLength="73.2" lengthAdjust="spacingAndGlyphs">ENERGETICA</text>
<text x="595.4" y="705.9" font-size="35" fill="#000" stroke="#000" stroke-width="0.8" font-family="Liberation Sans" textLength="21.4" lengthAdjust="spacingAndGlyphs">C</text>
<rect x="571.5" y="721.9" width="71.1" height="86.6" fill="#fff"/>
<text x="583.7" y="756" font-size="10.3" font-weight="bold" fill="#000" font-family="Liberation Sans" textLength="31.5" lengthAdjust="spacingAndGlyphs">111.43</text>
<text x="575.3" y="771.3" font-size="6.8" font-weight="bold" fill="#000" font-family="Liberation Sans" textLength="40.6" lengthAdjust="spacingAndGlyphs">kWh/m²anno</text></g>
<g transform="translate(495.5,0)"><path d="M441,622.3H453.5M447.3,615.8V629" stroke="#108010" stroke-width="2"/>
<text x="458.5" y="625.2" font-size="8.2" font-weight="bold" fill="#222" font-family="Liberation Sans" textLength="41" lengthAdjust="spacingAndGlyphs">Più efficiente</text>
<path d="M414.3,635.7L420.5,643.3L414.3,650.9H423.5L430.0,643.3L423.5,635.7Z" fill="#336600"/>
<path d="M395.8,636.0H408.5L414.3,643.3L408.5,650.6H395.8Z" fill="#fff" stroke="#1a1a1a" stroke-width="1.25" stroke-linejoin="round"/>
<text x="397" y="647.3" font-size="10.5" fill="#000" stroke="#000" stroke-width="0.3" font-family="Liberation Sans" textLength="11.4" lengthAdjust="spacingAndGlyphs">A4</text>
<path d="M434.5,643.3H543.8" stroke="#939393" stroke-width="1.5"/>
<path d="M414.3,654.0L420.5,661.6L414.3,669.2H434.5L441.0,661.6L434.5,654.0Z" fill="#006600"/>
<path d="M395.8,654.3H408.5L414.3,661.6L408.5,668.9H395.8Z" fill="#fff" stroke="#1a1a1a" stroke-width="1.25" stroke-linejoin="round"/>
<text x="397" y="665.6" font-size="10.5" fill="#000" stroke="#000" stroke-width="0.3" font-family="Liberation Sans" textLength="11.4" lengthAdjust="spacingAndGlyphs">A3</text>
<path d="M445.5,661.6H543.8" stroke="#939393" stroke-width="1.5"/>
<path d="M414.3,672.4L420.5,680.0L414.3,687.6H445.5L452.0,680.0L445.5,672.4Z" fill="#008a00"/>
<path d="M395.8,672.7H408.5L414.3,680.0L408.5,687.3H395.8Z" fill="#fff" stroke="#1a1a1a" stroke-width="1.25" stroke-linejoin="round"/>
<text x="397" y="684.0" font-size="10.5" fill="#000" stroke="#000" stroke-width="0.3" font-family="Liberation Sans" textLength="11.4" lengthAdjust="spacingAndGlyphs">A2</text>
<path d="M456.5,680.0H543.8" stroke="#939393" stroke-width="1.5"/>
<path d="M414.3,690.7L420.5,698.3L414.3,705.9H456.5L463.0,698.3L456.5,690.7Z" fill="#00c800"/>
<path d="M395.8,691.0H408.5L414.3,698.3L408.5,705.6H395.8Z" fill="#fff" stroke="#1a1a1a" stroke-width="1.25" stroke-linejoin="round"/>
<text x="397" y="702.3" font-size="10.5" fill="#000" stroke="#000" stroke-width="0.3" font-family="Liberation Sans" textLength="11.4" lengthAdjust="spacingAndGlyphs">A1</text>
<path d="M467.5,698.3H543.8" stroke="#939393" stroke-width="1.5"/>
<path d="M414.3,709.1L420.5,716.7L414.3,724.3H467.5L474.0,716.7L467.5,709.1Z" fill="#99cc00"/>
<path d="M395.8,709.4H408.5L414.3,716.7L408.5,724.0H395.8Z" fill="#fff" stroke="#1a1a1a" stroke-width="1.25" stroke-linejoin="round"/>
<text x="397" y="720.7" font-size="10.5" fill="#000" stroke="#000" stroke-width="0.3" font-family="Liberation Sans" textLength="6.2" lengthAdjust="spacingAndGlyphs">B</text>
<path d="M478.5,716.7H543.8" stroke="#939393" stroke-width="1.5"/>
<path d="M414.3,727.4L420.5,735.0L414.3,742.6H478.5L485.0,735.0L478.5,727.4Z" fill="#ffff00"/>
<path d="M395.8,727.7H408.5L414.3,735.0L408.5,742.3H395.8Z" fill="#fff" stroke="#1a1a1a" stroke-width="1.25" stroke-linejoin="round"/>
<text x="397" y="739.0" font-size="10.5" fill="#000" stroke="#000" stroke-width="0.3" font-family="Liberation Sans" textLength="6.2" lengthAdjust="spacingAndGlyphs">C</text>
<path d="M489.5,735.0H543.8" stroke="#939393" stroke-width="1.5"/>
<path d="M414.3,745.7L420.5,753.3L414.3,760.9H489.5L496.0,753.3L489.5,745.7Z" fill="#ffcc00"/>
<path d="M395.8,746.0H408.5L414.3,753.3L408.5,760.6H395.8Z" fill="#fff" stroke="#1a1a1a" stroke-width="1.25" stroke-linejoin="round"/>
<text x="397" y="757.3" font-size="10.5" fill="#000" stroke="#000" stroke-width="0.3" font-family="Liberation Sans" textLength="6.2" lengthAdjust="spacingAndGlyphs">D</text>
<path d="M500.5,753.3H543.8" stroke="#939393" stroke-width="1.5"/>
<path d="M414.3,764.1L420.5,771.7L414.3,779.3H500.5L507.0,771.7L500.5,764.1Z" fill="#cc6600"/>
<path d="M395.8,764.4H408.5L414.3,771.7L408.5,779.0H395.8Z" fill="#fff" stroke="#1a1a1a" stroke-width="1.25" stroke-linejoin="round"/>
<text x="397" y="775.7" font-size="10.5" fill="#000" stroke="#000" stroke-width="0.3" font-family="Liberation Sans" textLength="6.2" lengthAdjust="spacingAndGlyphs">E</text>
<path d="M511.5,771.7H543.8" stroke="#939393" stroke-width="1.5"/>
<path d="M414.3,782.4L420.5,790.0L414.3,797.6H511.5L518.0,790.0L511.5,782.4Z" fill="#cc6633"/>
<path d="M395.8,782.7H408.5L414.3,790.0L408.5,797.3H395.8Z" fill="#fff" stroke="#1a1a1a" stroke-width="1.25" stroke-linejoin="round"/>
<text x="397" y="794.0" font-size="10.5" fill="#000" stroke="#000" stroke-width="0.3" font-family="Liberation Sans" textLength="6.2" lengthAdjust="spacingAndGlyphs">F</text>
<path d="M522.5,790.0H543.8" stroke="#939393" stroke-width="1.5"/>
<path d="M414.3,800.8L420.5,808.4L414.3,816.0H522.5L529.0,808.4L522.5,800.8Z" fill="#ff0000"/>
<path d="M395.8,801.1H408.5L414.3,808.4L408.5,815.7H395.8Z" fill="#fff" stroke="#1a1a1a" stroke-width="1.25" stroke-linejoin="round"/>
<text x="397" y="812.4" font-size="10.5" fill="#000" stroke="#000" stroke-width="0.3" font-family="Liberation Sans" textLength="6.2" lengthAdjust="spacingAndGlyphs">G</text>
<path d="M533.5,808.4H543.8" stroke="#939393" stroke-width="1.5"/>
<path d="M442,829.4H454" stroke="#cc3311" stroke-width="2.6"/>
<text x="459.4" y="833.6" font-size="7.5" font-weight="bold" fill="#222" font-family="Liberation Sans" textLength="49.5" lengthAdjust="spacingAndGlyphs">Meno efficiente</text>
<rect x="566.4" y="591.2" width="78.6" height="41.4" fill="#009900"/>
<rect x="619.6" y="590.6" width="19.6" height="18.4" fill="#fff" stroke="#222" stroke-width="1.2"/>
<rect x="619" y="589.5" width="21" height="1.6" fill="#fff"/>
<text x="570.9" y="602.8" font-size="9.6" fill="#fff" stroke="#fff" stroke-width="0.25" font-family="Liberation Sans" textLength="33.8" lengthAdjust="spacingAndGlyphs">EDIFICIO</text>
<text x="570.9" y="614.6" font-size="9.6" fill="#fff" stroke="#fff" stroke-width="0.25" font-family="Liberation Sans" textLength="43.5" lengthAdjust="spacingAndGlyphs">A ENERGIA</text>
<text x="570.9" y="626.8" font-size="9.6" fill="#fff" stroke="#fff" stroke-width="0.25" font-family="Liberation Sans" textLength="50.8" lengthAdjust="spacingAndGlyphs">QUASI ZERO</text>
<rect x="566.7" y="637.6" width="78.3" height="180.6" fill="#009900"/>
<path d="M545.8,680L558.1,664V672.8H567V688H558.1V697.6Z" fill="#009900"/>
<text x="569.8" y="656.7" font-size="19" fill="#000" stroke="#000" stroke-width="0.6" font-family="Liberation Sans" textLength="72.2" lengthAdjust="spacingAndGlyphs">CLASSE</text>
<text x="569.8" y="672.8" font-size="11.7" fill="#000" stroke="#000" stroke-width="0.35" font-family="Liberation Sans" textLength="73.2" lengthAdjust="spacingAndGlyphs">ENERGETICA</text>
<text x="584.4" y="707.3" font-size="36" fill="#000" stroke="#000" stroke-width="0.8" font-family="Liberation Sans" textLength="39.5" lengthAdjust="spacingAndGlyphs">A2</text>
<rect x="570.5" y="721" width="71.5" height="87.8" fill="#fff"/>
<text x="582.9" y="756" font-size="10.3" font-weight="bold" fill="#000" font-family="Liberation Sans" textLength="25.5" lengthAdjust="spacingAndGlyphs">52.77</text>
<text x="575" y="771.6" font-size="6.8" font-weight="bold" fill="#000" font-family="Liberation Sans" textLength="40.1" lengthAdjust="spacingAndGlyphs">kWh/m²anno</text></g>
</svg>
<!-- LABELS_END -->
<!-- CONTENT_END -->

</body></html>
